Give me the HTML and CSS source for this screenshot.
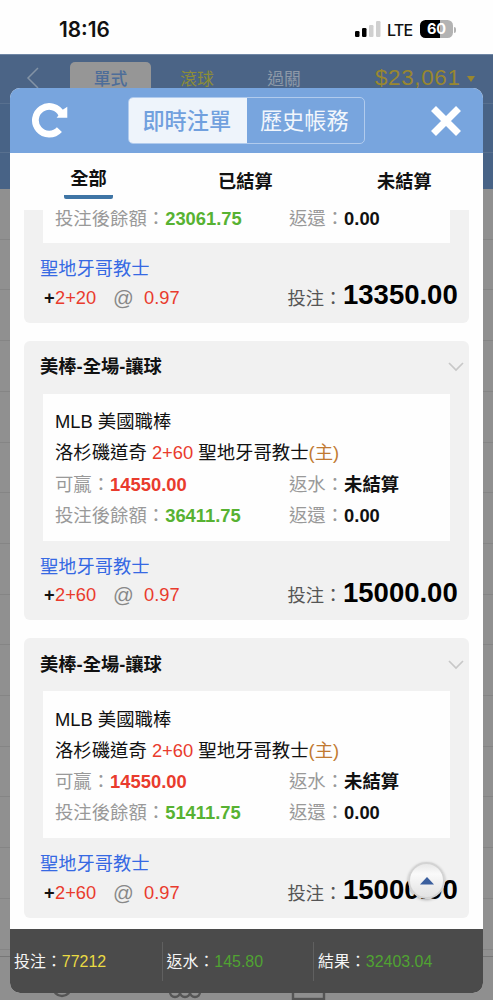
FILE: index.html
```
<!DOCTYPE html>
<html lang="zh-Hant">
<head>
<meta charset="utf-8">
<title>即時注單</title>
<link rel="stylesheet" href="styles.css">
</head>
<body>
<div class="screen">
  <header class="status">
    <span class="clock">18:16</span>
    <svg class="signal" width="26" height="16" viewBox="0 0 26 16"><rect x="0" y="10" width="4.5" height="6" rx="1.2"/><rect x="7" y="7" width="4.5" height="9" rx="1.2"/><rect x="14" y="4" width="4.5" height="12" rx="1.2" fill="#d0d0d0"/><rect x="21" y="0" width="4.5" height="16" rx="1.2" fill="#d0d0d0"/></svg>
    <span class="network">LTE</span>
    <span class="battery">60</span><span class="battery-tip"></span>
  </header>
  <nav class="app-nav">
    <svg class="back" width="13" height="22" viewBox="0 0 13 22"><path d="M12 1 2 11l10 10" fill="none" stroke="#8393a5" stroke-width="1.5"/></svg>
    <span class="nav-tab nav-active">單式</span>
    <span class="nav-tab nav-live">滾球</span>
    <span class="nav-tab nav-parlay">過關</span>
    <span class="balance">$23,061</span><span class="caret"></span>
  </nav>
  <div class="sub-nav"></div><div class="sub-nav sub-last"></div>
  <div class="rows"></div>
  <footer class="tabbar">
    <svg width="493" height="44" viewBox="0 0 493 44" fill="none" stroke="#555" stroke-width="2.4"><circle cx="62" cy="30" r="9"/><circle cx="175" cy="35" r="5"/><circle cx="185" cy="35" r="5"/><circle cx="195" cy="35" r="5"/><rect x="293" y="18" width="31" height="24"/></svg>
  </footer>

  <section class="modal">
    <div class="modal-head">
      <svg class="refresh" width="36" height="36" viewBox="0 0 36 36"><path d="M29.6 12.2A13.8 13.8 0 1 0 27.4 27.6" fill="none" stroke="#fff" stroke-width="6.8"/><path d="M35.3 4.8v10.9H24.6l2-2.4 2.6-4.6z" fill="#fff"/></svg>
      <div class="segment"><span class="seg seg-on">即時注單</span><span class="seg">歷史帳務</span></div>
      <svg class="close" width="32" height="32" viewBox="0 0 32 32"><path d="M3.5 3.5 28.5 28.5M28.5 3.5 3.5 28.5" stroke="#fff" stroke-width="7"/></svg>
    </div>
    <div class="filters">
      <span class="filter filter-on">全部</span><span class="filter filter-mid">已結算</span><span class="filter filter-end">未結算</span>
    </div>
    <div class="list">
      <article class="card card-cut">
        <div class="detail">
          <div class="row pair"><span class="left">投注後餘額：<b class="green">23061.75</b></span><span>返還：<b>0.00</b></span></div>
        </div>
        <div class="team">聖地牙哥教士</div>
        <div class="bet"><b class="plus">+</b><span class="line">2+20</span><span class="at">@</span><span class="odds">0.97</span><span class="stake">投注：</span><b class="amount">13350.00</b></div>
      </article>
      <article class="card">
        <div class="card-title">美棒-全場-讓球<svg width="16" height="10" viewBox="0 0 16 10"><path d="M1 1l7 7 7-7" fill="none" stroke="#c8c8c8" stroke-width="1.7"/></svg></div>
        <div class="detail">
          <div class="row">MLB 美國職棒</div>
          <div class="row"><span>洛杉磯道奇 <i class="red">2+60</i> 聖地牙哥教士<i class="home">(主)</i></span></div>
          <div class="row pair"><span class="left">可贏：<b class="red">14550.00</b></span><span>返水：<b>未結算</b></span></div>
          <div class="row pair"><span class="left">投注後餘額：<b class="green">36411.75</b></span><span>返還：<b>0.00</b></span></div>
        </div>
        <div class="team">聖地牙哥教士</div>
        <div class="bet"><b class="plus">+</b><span class="line">2+60</span><span class="at">@</span><span class="odds">0.97</span><span class="stake">投注：</span><b class="amount">15000.00</b></div>
      </article>
      <article class="card">
        <div class="card-title">美棒-全場-讓球<svg width="16" height="10" viewBox="0 0 16 10"><path d="M1 1l7 7 7-7" fill="none" stroke="#c8c8c8" stroke-width="1.7"/></svg></div>
        <div class="detail">
          <div class="row">MLB 美國職棒</div>
          <div class="row"><span>洛杉磯道奇 <i class="red">2+60</i> 聖地牙哥教士<i class="home">(主)</i></span></div>
          <div class="row pair"><span class="left">可贏：<b class="red">14550.00</b></span><span>返水：<b>未結算</b></span></div>
          <div class="row pair"><span class="left">投注後餘額：<b class="green">51411.75</b></span><span>返還：<b>0.00</b></span></div>
        </div>
        <div class="team">聖地牙哥教士</div>
        <div class="bet"><b class="plus">+</b><span class="line">2+60</span><span class="at">@</span><span class="odds">0.97</span><span class="stake">投注：</span><b class="amount">15000.00</b></div>
      </article>
    </div>
    <div class="totals">
      <span class="total">投注：<i class="yellow">77212</i></span><span class="total">返水：<i class="lime">145.80</i></span><span class="total">結果：<i class="lime">32403.04</i></span>
    </div>
    <div class="to-top"><svg width="14" height="8" viewBox="0 0 14 8"><path d="M7 0l7 7.5H0z" fill="#3b5f9e"/></svg></div>
  </section>
</div>
</body>
</html>
```
FILE: styles.css
```
* { box-sizing: border-box; }
body { margin: 0; background: #909090; font-family: "Liberation Sans", "Noto Sans CJK TC", sans-serif; color: #111; }
i { font-style: normal; }
svg { flex: none; display: block; }
.screen { position: relative; width: 493px; height: 1000px; overflow: hidden; display: flex; flex-direction: column; }

.status { height: 54px; flex: none; background: #fefefe; display: flex; align-items: center; padding: 5px 0 0 59px; font-family: Inter, sans-serif; }
.clock { font-size: 20.8px; font-weight: 600; width: 296px; line-height: 24px; }
.signal { margin-top: -1px; }
.network { font-size: 16px; font-weight: 500; margin-left: 6px; width: 33px; letter-spacing: -.7px; }
.battery { width: 33px; height: 18px; border-radius: 5.5px; background: linear-gradient(90deg, #000 60%, #b3b3b3 60%); color: #fff; font-size: 14.5px; line-height: 18px; font-weight: 700; text-align: center; margin-top: -1px; }
.battery-tip { width: 2px; height: 6px; background: #b3b3b3; border-radius: 0 2px 2px 0; margin-left: 1px; }

.app-nav { height: 49px; flex: none; background: #4b6486; border-top: 1px solid #6f86a5; display: flex; padding-left: 26px; color: #8d99a8; }
.back { margin-top: 12px; }
.nav-tab { font-size: 16.8px; line-height: 36px; text-align: center; margin-top: 7px; }
.nav-active { width: 81px; height: 42px; margin-left: 31px; background: #969696; color: #4d6d99; border-radius: 5px 5px 0 0; font-weight: 500; }
.nav-live { width: 34px; margin-left: 29px; color: #8c8c37; }
.nav-parlay { width: 34px; margin-left: 53px; }
.balance { color: #99872f; font-size: 22.4px; line-height: 24px; margin: 11px 0 0 74px; width: 93px; letter-spacing: .65px; white-space: nowrap; }
.caret { border: 4.5px solid transparent; border-top: 6px solid #99872f; border-bottom: 0; height: 6px; margin: 21px 0 0 -1px; }
.sub-nav { height: 49px; flex: none; background: #486386; border-top: 1px solid #58708f; }
.sub-last { height: 37px; }
.rows { flex: 1; background: repeating-linear-gradient(180deg, #909090 0 49.7px, #858585 49.7px 50.7px); }
.tabbar { height: 44px; flex: none; background: #8f8f8f; border-top: 1px solid #777; }

.modal { position: absolute; left: 10px; top: 88px; width: 473px; height: 905px; background: #fefefe; border-radius: 10px; overflow: hidden; display: flex; flex-direction: column; }
.modal-head { height: 65px; flex: none; background: #78a5de; display: flex; align-items: center; padding-left: 22px; }
.refresh { margin-top: -2px; }
.segment { display: flex; width: 237px; height: 47px; margin-left: 60px; border: 1px solid #b1cbed; border-radius: 5px; overflow: hidden; }
.seg { flex: 1; font-size: 22.2px; line-height: 48px; text-align: center; color: #f2f6fc; padding-right: 2px; }
.seg-on { background: #eef4fb; color: #71a0de; font-weight: 500; }
.close { margin-left: 65px; }
.filters { height: 57px; flex: none; display: flex; font-size: 18.2px; font-weight: 700; line-height: 28px; color: #111; }
.filter { margin-top: 15px; white-space: nowrap; }
.filter-on { margin: 12px 0 0 54px; width: 49px; height: 34px; text-align: center; border-bottom: 4px solid #3f75a5; border-radius: 2px; }
.filter-mid { margin-left: 105px; }
.filter-end { margin-left: 104.5px; }
.list { flex: 1; min-height: 0; overflow: hidden; display: flex; flex-direction: column; justify-content: flex-end; gap: 17.8px; padding: 0 14px 11.5px; }
.card { flex: none; height: 279.5px; background: #f1f1f1; border-radius: 6px; }
.card-cut { height: 112.9px; border-radius: 0 0 6px 6px; }
.card-title { height: 53px; display: flex; justify-content: space-between; align-items: center; padding: 0 5px 0 16px; font-size: 18.3px; font-weight: 700; line-height: 26px; }
.detail { height: 147px; margin: 0 19px; padding: 12.5px 0 0 12px; background: #fefefe; font-size: 18.36px; }
.card-cut .detail { height: 33.4px; padding-top: 0; }
.card-cut .row { margin-top: -7px; }
.card-cut .detail { display: flex; }
.row { height: 31.2px; line-height: 31.2px; display: flex; white-space: nowrap; }
.pair { color: #999; }
.pair b { color: #111; }
.left { width: 234px; }
.red, .pair .red { color: #e93b2d; }
.green, .pair .green { color: #57b232; }
.home { color: #c17a32; }
.team { margin: 12px 0 0 16px; font-size: 18.25px; line-height: 28px; color: #3669e3; }
.bet { display: flex; align-items: center; height: 29px; padding: 0 0 0 20px; white-space: nowrap; font-size: 18.3px; }
.plus { width: 11px; }
.line { width: 58px; color: #e93b2d; }
.at { width: 31px; font-size: 20.5px; color: #888; }
.odds { width: 143.5px; color: #e93b2d; }
.stake { width: 55.5px; color: #555; margin-top: -2px; }
.amount { font-size: 27.5px; line-height: 30px; color: #000; margin-top: -5px; }
.totals { height: 64px; flex: none; background: #4b4b4b; display: flex; align-items: center; color: #f5f5f5; font-size: 15.95px; }
.total { width: 151.5px; height: 39px; line-height: 39px; padding-left: 4px; white-space: nowrap; }
.total + .total { border-left: 1px solid #606060; }
.yellow { color: #eadb43; }
.lime { color: #50a332; }
.to-top { position: absolute; left: 398px; top: 774px; width: 37px; height: 37px; border-radius: 50%; border: 2px solid #d3d3d3; background: linear-gradient(#e8e8e8, #fafafa 30%, #e2e2e2); box-shadow: 0 1px 3px rgba(0,0,0,.3); display: flex; align-items: center; justify-content: center; }
```
